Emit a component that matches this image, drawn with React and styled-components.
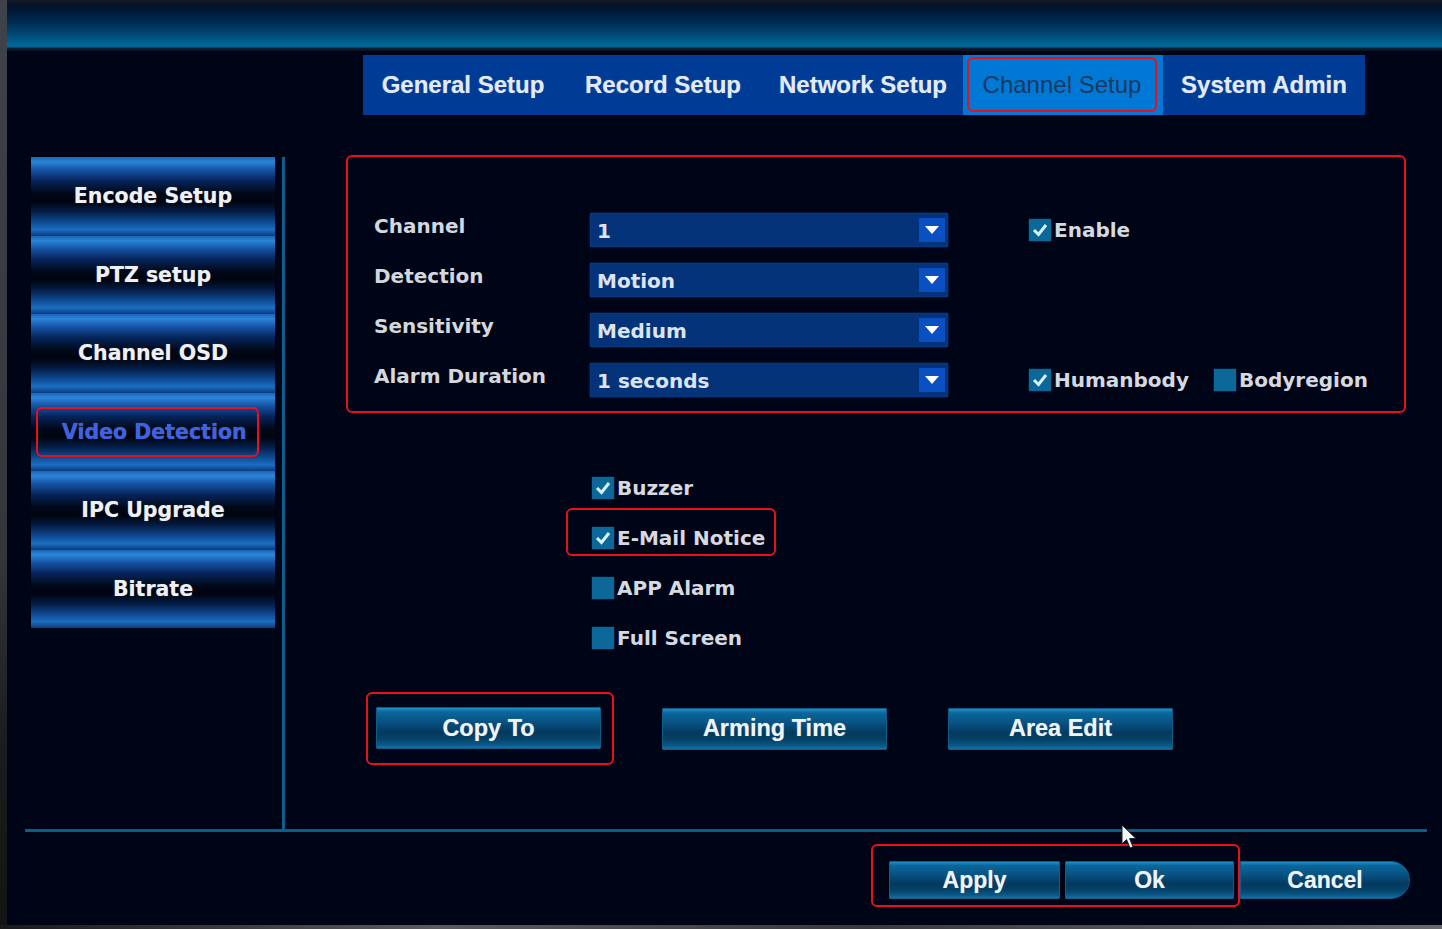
import React from 'react'
import styled, { createGlobalStyle } from 'styled-components'

const GlobalStyle = createGlobalStyle`
  html, body {
    margin: 0;
    padding: 0;
    background: #0c0c0e;
  }
  body {
    width: 1442px;
    height: 929px;
    overflow: hidden;
    font-family: "DejaVu Sans", "Noto Sans", sans-serif;
  }
`

const Frame = styled.div`
  width: 1442px;
  height: 929px;
  display: flex;
  flex-direction: column;
`

const MainRow = styled.div`
  display: flex;
  height: 925px;
`

const Bezel = styled.div`
  width: 7px;
  background: linear-gradient(180deg, #40424a 0%, #34363c 60%, #1c1c1e 80%, #141414 100%);
`

const BottomEdge = styled.div`
  height: 4px;
  background: linear-gradient(90deg, #1a1a1a 0%, #5a5a5c 30%, #3a3a3c 60%, #6a6a6c 100%);
`

const Screen = styled.div`
  flex: 1;
  position: relative;
  display: flex;
  flex-direction: column;
  background: #000417;
`

const Header = styled.div`
  height: 51px;
  background: linear-gradient(
    180deg,
    #141c2a 0%,
    #0a1424 8%,
    #001430 14%,
    #00284c 40%,
    #004c78 70%,
    #00689a 88%,
    #00608e 92%,
    #0e2036 95%,
    #071020 100%
  );
`

const TabBar = styled.div`
  display: flex;
  margin: 4px 0 0 356px;
  width: 1002px;
  height: 60px;
  background: #003c96;
`

const Tab = styled.div`
  flex: 0 0 ${p => p.w || 200}px;
  display: flex;
  align-items: center;
  justify-content: center;
  background: ${p => (p.active ? '#0078d6' : 'transparent')};
  color: ${p => (p.active ? '#1b3a5e' : '#e4eaf2')};
  font-family: "Liberation Sans", Arial, sans-serif;
  font-weight: ${p => (p.active ? 400 : 700)};
  font-size: 24px;
  text-shadow: ${p => (p.active ? 'none' : '0 0 1px rgba(200,220,255,0.5)')};
`

const TabMark = styled.span`
  flex: 1;
  align-self: stretch;
  margin: 2px 6px 3px 4px;
  border: 2px solid #e8101a;
  border-radius: 6px;
  display: flex;
  align-items: center;
  justify-content: center;
`

const Body = styled.div`
  display: flex;
  height: 674px;
  margin-top: 40px;
  padding-left: 24px;
`

const Sidebar = styled.div`
  width: 244px;
  margin-top: 2px;
  display: flex;
  flex-direction: column;
  align-self: flex-start;
`

const SideItem = styled.div`
  height: 78.5px;
  display: flex;
  align-items: center;
  justify-content: ${p => (p.active ? 'flex-start' : 'center')};
  padding-left: ${p => (p.active ? '5px' : '0')};
  box-sizing: border-box;
  background: linear-gradient(
    180deg,
    #1a64b6 0%,
    #2a86d8 6%,
    #1654a6 16%,
    #06245a 30%,
    #000818 46%,
    #00040f 56%,
    #041a40 68%,
    #0e4890 82%,
    #1b6ec2 92%,
    #0c3a7c 100%
  );
  color: ${p => (p.active ? '#3c62e6' : '#eef0f4')};
  font-weight: 700;
  font-size: 20.5px;
  text-shadow: 0 0 1px rgba(230, 235, 255, 0.4);
`

const SideMark = styled.span`
  display: flex;
  align-items: center;
  height: 46px;
  padding: 0 10px 0 24px;
  border: 2px solid #e8101a;
  border-radius: 6px;
`

const VLine = styled.div`
  width: 3px;
  margin: 2px 0 0 7px;
  background: #0a5f8c;
`

const Content = styled.div`
  display: flex;
  flex-direction: column;
  padding-left: 61px;
`

const Panel = styled.div`
  width: 1060px;
  height: 258px;
  box-sizing: border-box;
  border: 2px solid #e8101a;
  border-radius: 6px;
  padding: 56px 0 0 26px;
  display: grid;
  grid-template-columns: 216px 358px auto;
  grid-auto-rows: 34px;
  row-gap: 16px;
  align-items: center;
`

const Label = styled.div`
  color: #d4d7dc;
  font-weight: 700;
  font-size: 20px;
  padding-bottom: 8px;
  white-space: nowrap;
`

const Select = styled.div`
  height: 34px;
  box-sizing: border-box;
  display: flex;
  align-items: center;
  background: #05337a;
  border: 1px solid #08397c;
  box-shadow: 0 0 2px #073a7c;
  color: #dce4ee;
  font-weight: 700;
  font-size: 20px;
  padding-left: 6px;
`

const SelectText = styled.span`
  flex: 1;
  padding-top: 1px;
`

const ArrowBox = styled.span`
  width: 26px;
  height: 24px;
  margin-right: 2px;
  background: #0a50c2;
  display: flex;
  align-items: center;
  justify-content: center;
`

const Options = styled.div`
  display: flex;
  gap: 25px;
  margin-left: 81px;
`

const Check = styled.label`
  display: flex;
  align-items: center;
  gap: 3px;
  color: #d6dae0;
  font-weight: 700;
  font-size: 20px;
  white-space: nowrap;
`

const Box = styled.span`
  width: 22px;
  height: 22px;
  background: #0b6899;
  box-shadow: 0 0 1px #0e77ad;
  display: flex;
  align-items: center;
  justify-content: center;
`

const CheckList = styled.div`
  margin: 50px 0 0 220px;
  display: flex;
  flex-direction: column;
`

const CheckRow = styled.div`
  width: 210px;
  height: ${p => (p.marked ? 48 : 50)}px;
  margin: ${p => (p.marked ? '-5px 0 7px' : '0')};
  box-sizing: border-box;
  display: flex;
  align-items: center;
  padding: ${p => (p.marked ? '12px' : '0')} 0 0 24px;
  border: 2px solid ${p => (p.marked ? '#e8101a' : 'transparent')};
  border-radius: 6px;
`

const ButtonRow = styled.div`
  display: flex;
  align-items: center;
  margin: 29px 0 0 20px;
  gap: 48px;
`

const ButtonMark = styled.div`
  display: flex;
  padding: ${p => p.pad};
  border: 2px solid ${p => (p.marked ? '#e8101a' : 'transparent')};
  border-radius: 6px;
  gap: ${p => p.gap || 0}px;
`

const Button = styled.div`
  width: ${p => p.w || 225}px;
  height: ${p => p.h || 42}px;
  box-sizing: border-box;
  display: flex;
  align-items: center;
  justify-content: center;
  margin-top: ${p => p.mt || 0}px;
  margin-left: ${p => p.ml || 0}px;
  border: 1px solid #0d5c8a;
  border-radius: ${p => (p.pill ? '0 19px 19px 0' : '1px')};
  background: linear-gradient(
    180deg,
    #1c90c8 0%,
    #0b669a 10%,
    #085282 35%,
    #04395f 60%,
    #054166 76%,
    #0a5888 92%,
    #1673a6 100%
  );
  color: #f0f4f8;
  font-family: "Liberation Sans", Arial, sans-serif;
  font-weight: 700;
  font-size: ${p => p.fs || 23.5}px;
  text-shadow: 0 0 1px rgba(255, 255, 255, 0.4);
`

const HLine = styled.div`
  height: 3px;
  margin: 0 15px 0 18px;
  background: #0b5d88;
`

const Footer = styled.div`
  display: flex;
  justify-content: flex-end;
  align-items: flex-start;
  margin-top: 12px;
  padding-right: 32px;
`

const Cursor = styled.svg`
  position: absolute;
  left: 1114px;
  top: 824px;
`

const Tick = () => (
  <svg width="16" height="14" viewBox="0 0 16 14">
    <polyline points="2,7 6.5,11.5 14,2" fill="none" stroke="#d4f4ff" strokeWidth="3" />
  </svg>
)

const CheckBox = ({ checked, children }) => (
  <Check>
    <Box>{checked && <Tick />}</Box>
    {children}
  </Check>
)

const Dropdown = ({ value }) => (
  <Select>
    <SelectText>{value}</SelectText>
    <ArrowBox>
      <svg width="16" height="10" viewBox="0 0 16 10">
        <polygon points="1,1 15,1 8,9" fill="#ffffff" />
      </svg>
    </ArrowBox>
  </Select>
)

const tabs = ['General Setup', 'Record Setup', 'Network Setup', 'Channel Setup', 'System Admin']
const menu = ['Encode Setup', 'PTZ setup', 'Channel OSD', 'Video Detection', 'IPC Upgrade', 'Bitrate']
const alarms = [
  { label: 'Buzzer', checked: true },
  { label: 'E-Mail Notice', checked: true, marked: true },
  { label: 'APP Alarm', checked: false },
  { label: 'Full Screen', checked: false },
]

const App = () => (
  <Frame>
    <GlobalStyle />
    <MainRow>
      <Bezel />
      <Screen>
        <Header />
        <TabBar>
          {tabs.map((t, i) =>
            t === 'Channel Setup' ? (
              <Tab key={t} active>
                <TabMark>{t}</TabMark>
              </Tab>
            ) : (
              <Tab key={t} w={i === 4 ? 202 : 200}>
                {t}
              </Tab>
            )
          )}
        </TabBar>

        <Body>
          <Sidebar>
            {menu.map(m =>
              m === 'Video Detection' ? (
                <SideItem key={m} active>
                  <SideMark>{m}</SideMark>
                </SideItem>
              ) : (
                <SideItem key={m}>{m}</SideItem>
              )
            )}
          </Sidebar>
          <VLine />
          <Content>
            <Panel>
              <Label>Channel</Label>
              <Dropdown value="1" />
              <Options>
                <CheckBox checked>Enable</CheckBox>
              </Options>

              <Label>Detection</Label>
              <Dropdown value="Motion" />
              <div />

              <Label>Sensitivity</Label>
              <Dropdown value="Medium" />
              <div />

              <Label>Alarm Duration</Label>
              <Dropdown value="1 seconds" />
              <Options>
                <CheckBox checked>Humanbody</CheckBox>
                <CheckBox>Bodyregion</CheckBox>
              </Options>
            </Panel>

            <CheckList>
              {alarms.map(a => (
                <CheckRow key={a.label} marked={a.marked}>
                  <CheckBox checked={a.checked}>{a.label}</CheckBox>
                </CheckRow>
              ))}
            </CheckList>

            <ButtonRow>
              <ButtonMark marked pad="13px 11px 14px 8px">
                <Button>Copy To</Button>
              </ButtonMark>
              <Button>Arming Time</Button>
              <Button ml={13}>Area Edit</Button>
            </ButtonRow>
          </Content>
        </Body>

        <HLine />
        <Footer>
          <ButtonMark marked pad="15px 4px 6px 16px" gap={5}>
            <Button w={171} h={38} fs={23}>Apply</Button>
            <Button w={169} h={38} fs={23}>Ok</Button>
          </ButtonMark>
          <Button w={170} h={38} fs={23} mt={17} pill>Cancel</Button>
        </Footer>

        <Cursor width="18" height="28" viewBox="0 0 18 28">
          <path
            d="M1 1 L1 20 L5.5 15.5 L9 24 L12 22.8 L8.6 14.6 L15 14.6 Z"
            fill="#f4f6fa"
            stroke="#1a1e28"
            strokeWidth="1"
          />
        </Cursor>
      </Screen>
    </MainRow>
    <BottomEdge />
  </Frame>
)

export default App
